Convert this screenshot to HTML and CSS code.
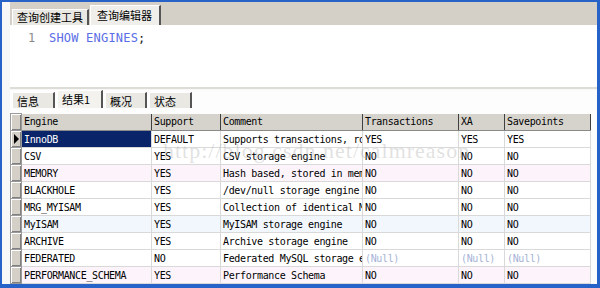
FILE: index.html
```html
<!DOCTYPE html>
<html lang="zh-CN">
  <head>
    <meta charset="utf-8">
    <title>查询编辑器 - SHOW ENGINES</title>
    <link rel="stylesheet" href="styles.css">
  </head>
  <body>
    <div class="frame">
      <div class="window">
        <div class="tabs top-tabs">
          <div class="tab">查询创建工具</div>
          <div class="tab active">查询编辑器</div>
        </div>

        <div class="editor">
          <div class="line"><span class="ln">1</span><code><span class="kw">SHOW ENGINES</span>;</code></div>
        </div>

        <div class="split"></div>

        <div class="results">
          <div class="tabs result-tabs">
            <div class="tab w43">信息</div>
            <div class="tab active w46">结果1</div>
            <div class="tab w42">概况</div>
            <div class="tab w43">状态</div>
          </div>

          <table class="grid">
            <colgroup>
              <col style="width:11px">
              <col style="width:130px">
              <col style="width:69px">
              <col style="width:142px">
              <col style="width:96px">
              <col style="width:46px">
              <col style="width:86px">
            </colgroup>
            <thead>
              <tr>
                <th class="ind"></th>
                <th>Engine</th>
                <th>Support</th>
                <th>Comment</th>
                <th>Transactions</th>
                <th>XA</th>
                <th>Savepoints</th>
              </tr>
            </thead>
            <tbody>
              <tr>
                <td class="ind"><span class="arrow"></span></td>
                <td class="sel">InnoDB</td>
                <td>DEFAULT</td>
                <td>Supports transactions, row-level locking, and foreign keys</td>
                <td>YES</td>
                <td>YES</td>
                <td>YES</td>
              </tr>
              <tr>
                <td class="ind"></td>
                <td>CSV</td>
                <td>YES</td>
                <td>CSV storage engine</td>
                <td>NO</td>
                <td>NO</td>
                <td>NO</td>
              </tr>
              <tr class="pink">
                <td class="ind"></td>
                <td>MEMORY</td>
                <td>YES</td>
                <td>Hash based, stored in memory, useful for temporary tables</td>
                <td>NO</td>
                <td>NO</td>
                <td>NO</td>
              </tr>
              <tr>
                <td class="ind"></td>
                <td>BLACKHOLE</td>
                <td>YES</td>
                <td>/dev/null storage engine (anything you write to it disappears)</td>
                <td>NO</td>
                <td>NO</td>
                <td>NO</td>
              </tr>
              <tr>
                <td class="ind"></td>
                <td>MRG_MYISAM</td>
                <td>YES</td>
                <td>Collection of identical MyISAM tables</td>
                <td>NO</td>
                <td>NO</td>
                <td>NO</td>
              </tr>
              <tr class="blue">
                <td class="ind"></td>
                <td>MyISAM</td>
                <td>YES</td>
                <td>MyISAM storage engine</td>
                <td>NO</td>
                <td>NO</td>
                <td>NO</td>
              </tr>
              <tr>
                <td class="ind"></td>
                <td>ARCHIVE</td>
                <td>YES</td>
                <td>Archive storage engine</td>
                <td>NO</td>
                <td>NO</td>
                <td>NO</td>
              </tr>
              <tr>
                <td class="ind"></td>
                <td>FEDERATED</td>
                <td>NO</td>
                <td>Federated MySQL storage engine</td>
                <td class="null">(Null)</td>
                <td class="null">(Null)</td>
                <td class="null">(Null)</td>
              </tr>
              <tr class="pink">
                <td class="ind"></td>
                <td>PERFORMANCE_SCHEMA</td>
                <td>YES</td>
                <td>Performance Schema</td>
                <td>NO</td>
                <td>NO</td>
                <td>NO</td>
              </tr>
            </tbody>
          </table>
        </div>

        <div class="watermark">http://blog.csdn.net/calmreason</div>
      </div>
    </div>
  </body>
</html>
```

FILE: styles.css
```css
body {
  margin: 0;
  padding: 0;
  font-family: "DejaVu Sans Mono", monospace;
}

.frame {
  width: 600px;
  height: 288px;
  box-sizing: border-box;
  padding: 2px 3px 4px 2px;
  background: #2762c8;
}

.window {
  position: relative;
  height: 282px;
  padding-left: 8px;
  background: #f7f7f7;
  overflow: hidden;
}

/* tabs */
.tabs {
  display: flex;
  align-items: flex-end;
  font-family: "Noto Sans CJK SC", sans-serif;
  font-size: 11px;
  color: #000;
}
.tab {
  box-sizing: border-box;
  background: #e9e8e3;
  border-top: 1px solid #fff;
  border-left: 1px solid #fff;
  border-right: 2px solid #555;
  padding: 0 0 0 4px;
  white-space: nowrap;
}

.top-tabs {
  height: 23px;
  padding-left: 2px;
  background: #d4d0c8;
  gap: 1px;
}
.top-tabs .tab {
  width: 77px;
  height: 16px;
  line-height: 15px;
}
.top-tabs .tab.active {
  width: 71px;
  height: 20px;
  line-height: 19px;
  padding-left: 6px;
  background: #efeeea;
}

.result-tabs {
  height: 18px;
  margin-top: 1px;
  padding-left: 2px;
  gap: 2px;
}
.result-tabs .tab {
  height: 16px;
  line-height: 17px;
}
.result-tabs .tab.active {
  height: 18px;
  line-height: 16px;
  background: #f3f2ee;
}
.w42 { width: 42px; }
.w43 { width: 43px; }
.w46 { width: 46px; }

/* editor */
.editor {
  height: 62px;
  background: #fff;
}
.line {
  display: flex;
  padding: 6px 0 0 18px;
  line-height: 14px;
  font-size: 12px;
}
.ln {
  width: 21px;
  color: #8a8a8a;
}
.line code {
  font-family: "DejaVu Sans Mono", monospace;
  letter-spacing: 0.2px;
  color: #222;
}
.kw {
  color: #5a6de6;
}

.split {
  height: 2px;
  background: #dedcd6;
}

.results {
  height: 193px;
  background: #fdfdfd;
}

/* grid */
.grid {
  margin-top: 5px;
  width: 580px;
  border-collapse: collapse;
  table-layout: fixed;
  font-size: 10px;
  letter-spacing: -0.35px;
  color: #000;
}
.grid th,
.grid td {
  padding: 0 0 0 2px;
  text-align: left;
  white-space: nowrap;
  overflow: hidden;
  font-weight: normal;
}
.grid th {
  height: 16px;
  background: #d6d3cc;
  border-left: 1px solid #fff;
  border-right: 1px solid #404040;
  border-bottom: 1px solid #8a8a8a;
}
.grid td {
  height: 16px;
  border: 1px solid #d9d9d9;
  background: #fff;
}
.grid tr.pink td {
  background: #fdf4fb;
}
.grid tr.blue td {
  background: #f2f7fd;
}
.grid .ind,
.grid tr td.ind {
  padding: 0;
  background: #d4d0c8;
  border: 1px solid #9a9a9a;
  box-shadow: inset 1px 1px #fff, inset -1px -1px #808080;
}
.arrow {
  display: block;
  width: 0;
  height: 0;
  margin-left: 3px;
  border-top: 5px solid transparent;
  border-bottom: 5px solid transparent;
  border-left: 5px solid #000;
}
.grid td.sel {
  background: #0a246a;
  color: #fff;
}
.grid td.null {
  color: #a7b3d6;
}

.watermark {
  position: absolute;
  left: 161px;
  top: 136px;
  font-family: "Liberation Serif", serif;
  font-size: 22px;
  letter-spacing: 1px;
  color: rgba(160, 160, 160, 0.32);
  pointer-events: none;
}
```
